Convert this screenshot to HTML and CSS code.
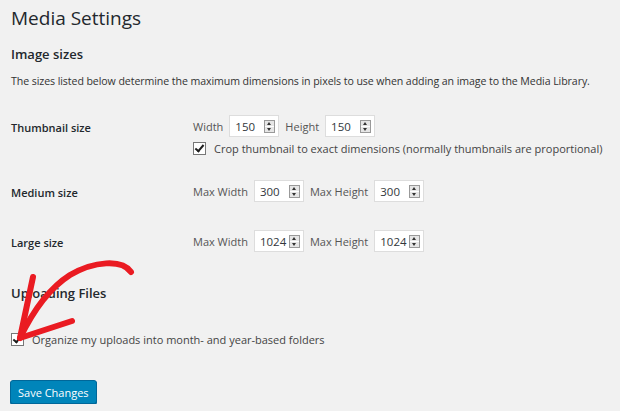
FILE: index.html
```html
<!DOCTYPE html>
<html>
<head>
  <title>Media Settings</title>
  <link rel="stylesheet" href="styles.css">
</head>
<body>
  <div class="wrap">
    <h1>Media Settings</h1>

    <h2>Image sizes</h2>
    <p class="intro">The sizes listed below determine the maximum dimensions in pixels to use when adding an image to the Media Library.</p>

    <table class="form-table">
      <tr class="row-thumb">
        <th>Thumbnail size</th>
        <td>
          <div class="fields">
            <span class="lbl">Width</span>
            <span class="num"><span class="val">150</span><span class="spin"></span></span>
            <span class="lbl">Height</span>
            <span class="num"><span class="val">150</span><span class="spin"></span></span>
          </div>
          <label class="check-line"><span class="check"></span>Crop thumbnail to exact dimensions (normally thumbnails are proportional)</label>
        </td>
      </tr>
      <tr class="row-medium">
        <th>Medium size</th>
        <td>
          <div class="fields">
            <span class="lbl">Max Width</span>
            <span class="num"><span class="val">300</span><span class="spin"></span></span>
            <span class="lbl">Max Height</span>
            <span class="num"><span class="val">300</span><span class="spin"></span></span>
          </div>
        </td>
      </tr>
      <tr class="row-large">
        <th>Large size</th>
        <td>
          <div class="fields">
            <span class="lbl">Max Width</span>
            <span class="num"><span class="val">1024</span><span class="spin"></span></span>
            <span class="lbl">Max Height</span>
            <span class="num"><span class="val">1024</span><span class="spin"></span></span>
          </div>
        </td>
      </tr>
    </table>

    <h2 class="uploads">Uploading Files</h2>
    <label class="check-line organize"><span class="check"></span>Organize my uploads into month- and year-based folders</label>

    <button class="button-primary">Save Changes</button>
  </div>

  <!-- hand drawn annotation arrow -->
  <svg class="arrow" width="140" height="90" viewBox="0 0 140 90">
    <path d="M131 19 C122 6 94 8 70 22 C48 36 32 60 20 85" fill="none" stroke="#ea1b22" stroke-width="6" stroke-linecap="round"/>
    <path d="M33 24 L20 85 L72 68" fill="none" stroke="#ea1b22" stroke-width="6" stroke-linecap="round" stroke-linejoin="round"/>
  </svg>
</body>
</html>
```

FILE: styles.css
```css
body {
  margin: 0;
  background-color: #f1f1f1;
  font-family: "Open Sans", "Noto Sans", sans-serif;
  color: #23282d;
  font-size: 11px;
}

.wrap {
  padding: 3px 11px 0 11px;
}

h1 {
  font-size: 19px;
  font-weight: 400;
  margin: 0;
  line-height: 30px;
}

h2 {
  font-size: 13px;
  font-weight: 600;
  margin: 10px 0 0 0;
  line-height: 22px;
}

.intro {
  margin: 7px 0 0 0;
  line-height: 18px;
  color: #333;
  font-size: 10.6px;
  letter-spacing: -0.08px;
  white-space: nowrap;
}

.form-table {
  border-collapse: collapse;
  margin-top: 25px;
}

.form-table th {
  width: 182px;
  text-align: left;
  font-weight: 600;
  vertical-align: top;
  padding: 0;
  line-height: 20px;
}

.form-table td {
  padding: 0;
  vertical-align: top;
}

.row-thumb th { padding-top: 3px; }
.row-medium td { padding-top: 24px; }
.row-medium th { padding-top: 27px; }
.row-large td { padding-top: 27px; }
.row-large th { padding-top: 30px; }

.fields {
  display: flex;
  align-items: center;
  gap: 6px;
  color: #555;
}

.num {
  display: inline-flex;
  align-items: center;
  justify-content: space-between;
  background: #fff;
  border: 1px solid #ddd;
  height: 20px;
  width: 40px;
  padding: 0 3px 0 5px;
  color: #32373c;
  font-size: 11.5px;
}

.spin {
  width: 9px;
  height: 11px;
  border: 1px solid #999;
  background:
    linear-gradient(#fff, #fff) 0 5px / 100% 1px no-repeat,
    #e6e6e6;
  position: relative;
}

.spin::before, .spin::after {
  content: "";
  position: absolute;
  left: 2px;
  border-left: 2.5px solid transparent;
  border-right: 2.5px solid transparent;
}

.spin::before {
  top: 1px;
  border-bottom: 3px solid #333;
}

.spin::after {
  bottom: 1px;
  border-top: 3px solid #333;
}

.check-line {
  display: flex;
  align-items: center;
  gap: 8px;
  margin-top: 4px;
  color: #444;
}

.check {
  width: 11px;
  height: 11px;
  border: 1px solid #777;
  background: #fff;
  position: relative;
}

.check::after {
  content: "";
  position: absolute;
  left: 3px;
  top: 0px;
  width: 3px;
  height: 7px;
  border: solid #1e1e1e;
  border-width: 0 2px 2px 0;
  transform: rotate(40deg);
}

.uploads {
  margin-top: 29px;
}

.organize {
  margin-top: 28px;
}

.button-primary {
  margin-top: 33px;
  background: #0085ba;
  border: 1px solid #006799;
  border-radius: 3px;
  color: #fff;
  font-family: "Open Sans", "Noto Sans", sans-serif;
  font-size: 11px;
  height: 24px;
  padding: 0 7px;
  margin-left: -1px;
  box-shadow: 0 1px 0 #006799;
}

.arrow {
  position: absolute;
  left: 0;
  top: 253px;
}
```
